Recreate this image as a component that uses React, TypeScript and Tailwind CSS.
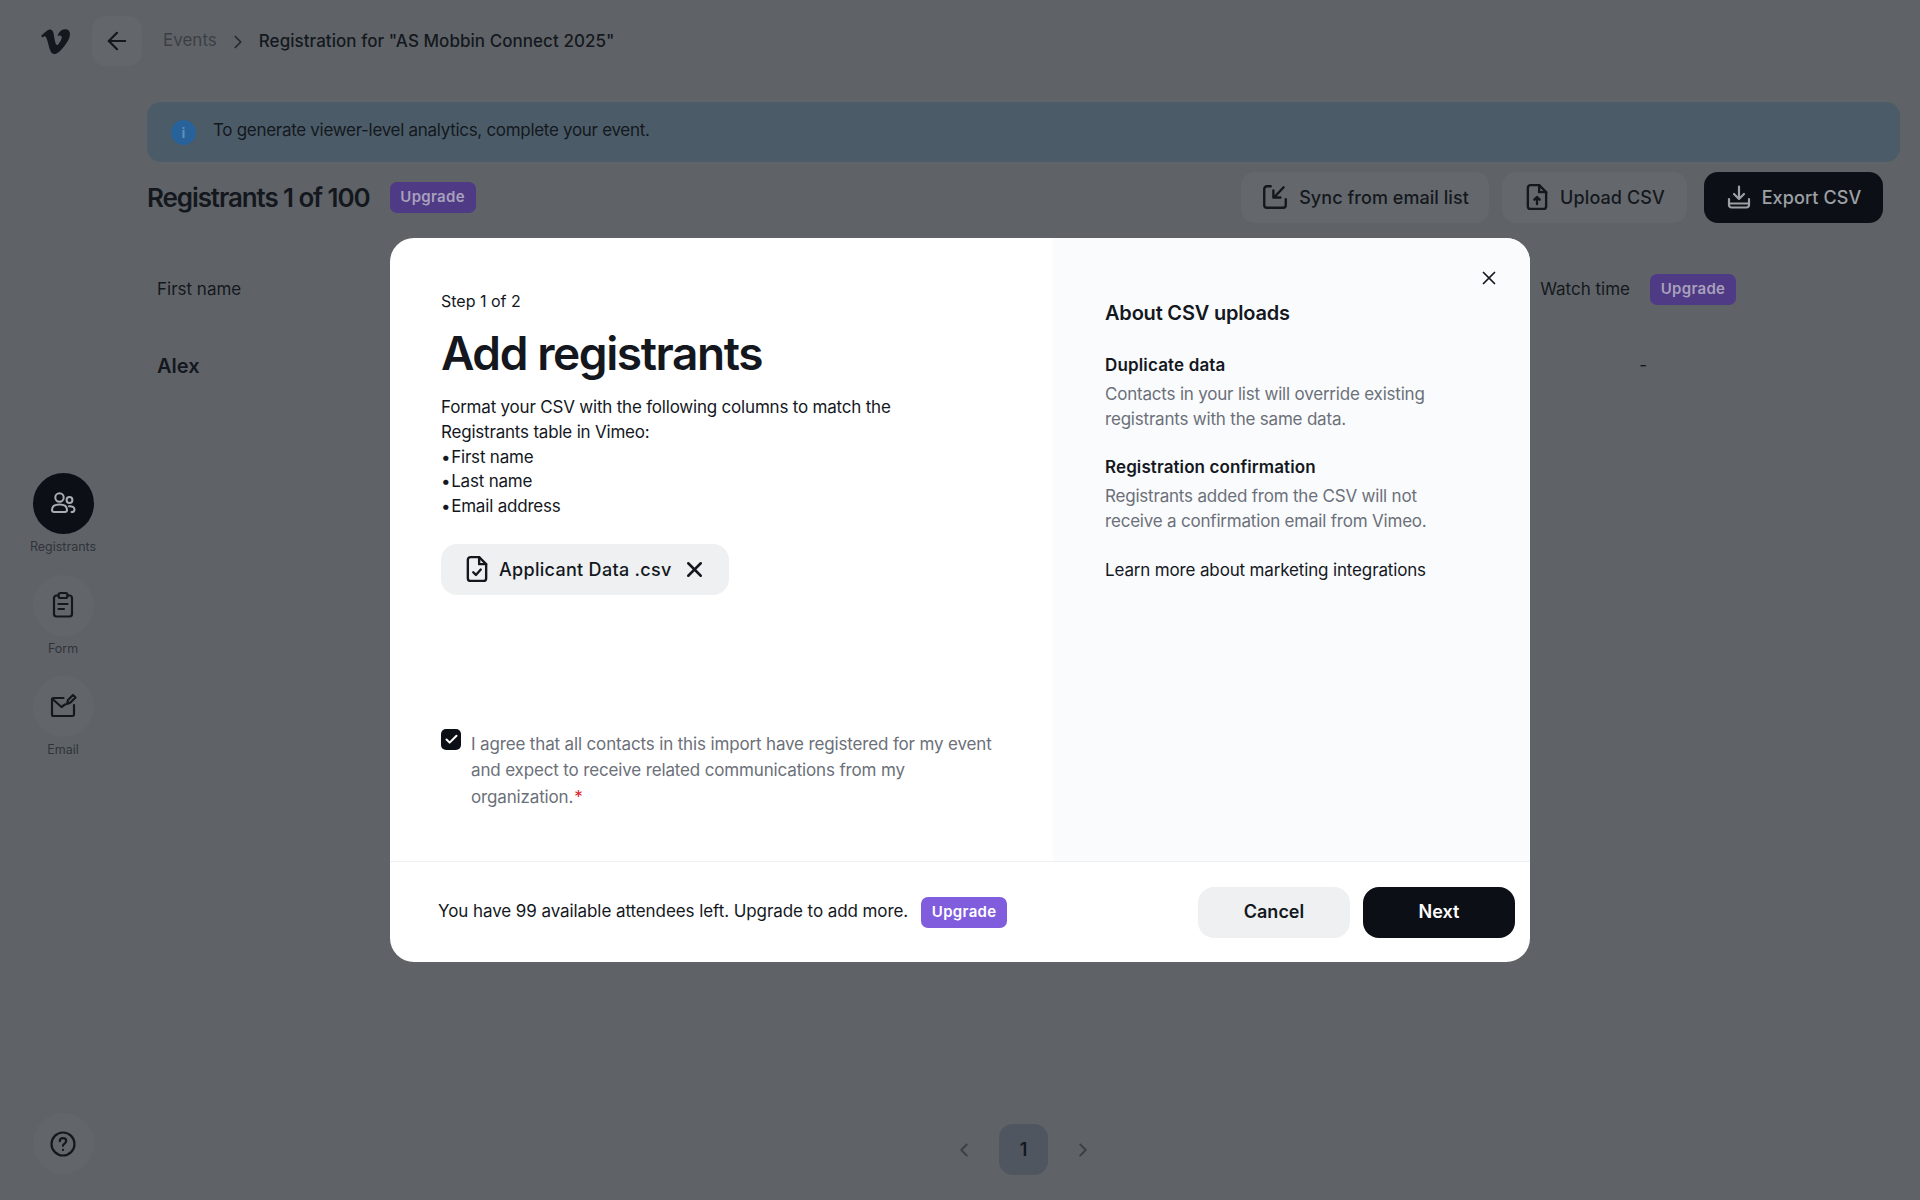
import { ArrowLeft, ChevronLeft, ChevronRight, ChevronRight as Crumb, Check, X } from "lucide-react";
import { FaVimeoV } from "react-icons/fa";

const font = "font-['Inter','Noto_Sans',sans-serif]";

function Upgrade({ dim = false }: { dim?: boolean }) {
  return (
    <span
      className={`inline-flex h-[31px] w-[86px] items-center justify-center rounded-[7px] text-[15px] font-semibold tracking-[0.3px] ${
        dim ? "bg-[#4f3a86] text-[#a8a1bb]" : "bg-[#7f5ddd] text-white"
      }`}
    >
      Upgrade
    </span>
  );
}

function UsersIcon() {
  return (
    <svg width="28" height="28" viewBox="0 0 28 28" fill="none" stroke="#a9acb0" strokeWidth="2" strokeLinecap="round" strokeLinejoin="round">
      <circle cx="10.5" cy="7.5" r="4.2" />
      <path d="M3 20c0-3.6 3-5.4 7.5-5.4s7.5 1.8 7.5 5.4c0 1.4-1 2-2.2 2H5.2C4 22 3 21.400 3 20Z" />
      <circle cx="20.500" cy="10" r="2.900" />
      <path d="M20 16.200c3.200-.3 5.500 1 5.500 3.200 0 1.600-1.200 2.600-3 2.600" />
    </svg>
  );
}

function FormIcon() {
  return (
    <svg width="26" height="28" viewBox="0 0 26 28" fill="none" stroke="#14181e" strokeWidth="2.200" strokeLinecap="round" strokeLinejoin="round">
      <path d="M8.500 4.500H6.500a2.500 2.500 0 0 0-2.500 2.500v16a2.500 2.500 0 0 0 2.500 2.500h13a2.500 2.500 0 0 0 2.500-2.500V7a2.500 2.500 0 0 0-2.500-2.500h-2" />
      <rect x="8.500" y="2" width="9" height="5" rx="2" />
      <path d="M8.500 13h9M8.500 18h5.500" />
    </svg>
  );
}

function EmailIcon() {
  return (
    <svg width="28" height="28" viewBox="0 0 28 28" fill="none" stroke="#14181e" strokeWidth="2.200" strokeLinecap="round" strokeLinejoin="round">
      <path d="M14.500 6H4.500A1.500 1.500 0 0 0 3 7.500v15A1.500 1.500 0 0 0 4.500 24h19a1.500 1.500 0 0 0 1.500-1.500V13" />
      <path d="M3.500 7l9 8 3.500-2.500" />
      <path d="M18 12l1-4 5-5 2.500 2.500-5 5-3.500 1.500Z" />
    </svg>
  );
}

function SyncIcon() {
  return (
    <svg width="28" height="28" viewBox="0 0 26 26" fill="none" stroke="#14181e" strokeWidth="2.200" strokeLinecap="round" strokeLinejoin="round">
      <path d="M9 3H5.500A2.500 2.500 0 0 0 3 5.500v15A2.500 2.500 0 0 0 5.500 23h15a2.500 2.500 0 0 0 2.500-2.500V15" />
      <path d="M21 4l-8.500 9M11.500 7v6.500H18" />
    </svg>
  );
}

function UploadIcon() {
  return (
    <svg width="26" height="28" viewBox="0 0 24 26" fill="none" stroke="#14181e" strokeWidth="2.200" strokeLinecap="round" strokeLinejoin="round">
      <path d="M14 2H6a2.500 2.500 0 0 0-2.500 2.500v17A2.500 2.500 0 0 0 6 24h12a2.500 2.500 0 0 0 2.500-2.500V8.500L14 2Z" />
      <path d="M14 2v6.500h6.500" />
      <path d="M12 19.500v-6M9.500 15.500l2.500-2.500 2.500 2.500" />
    </svg>
  );
}

function DownloadIcon() {
  return (
    <svg width="26" height="26" viewBox="0 0 26 26" fill="none" stroke="#9da0a4" strokeWidth="2.200" strokeLinecap="round" strokeLinejoin="round">
      <path d="M3 15v6a2.500 2.500 0 0 0 2.500 2.500h15A2.500 2.500 0 0 0 23 21v-6" />
      <path d="M3 19.500h20" />
      <path d="M13 2.500v12M8 10l5 5 5-5" />
    </svg>
  );
}

function FileCheckIcon() {
  return (
    <svg width="26" height="28" viewBox="0 0 24 26" fill="none" stroke="#14181e" strokeWidth="2.200" strokeLinecap="round" strokeLinejoin="round">
      <path d="M14 2H6a2.500 2.500 0 0 0-2.500 2.500v17A2.500 2.500 0 0 0 6 24h12a2.500 2.500 0 0 0 2.500-2.500V8.500L14 2Z" />
      <path d="M14 2v6.500h6.500" />
      <path d="M8.500 16l2.500 2.500 4.500-5" />
    </svg>
  );
}

function Bullet({ children }: { children: string }) {
  return (
    <p>
      <span className="tracking-[-4px]">•</span> {children}
    </p>
  );
}

function Background() {
  return (
    <div className="flex h-[1200px] flex-col">
      {/* Top bar */}
      <header className="mb-[20px] flex h-[82px] items-center pl-[39px]">
        <FaVimeoV className="h-[33px] w-[33px] text-[#14181e]" />
        <button className="ml-[20px] flex h-[50px] w-[50px] items-center justify-center rounded-[14px] bg-[#63676b]">
          <ArrowLeft size={28} className="text-[#14181e]" strokeWidth={1.9} />
        </button>
        <span className="ml-[21px] text-[17px] text-[#3b3f45]">Events</span>
        <Crumb size={22} className="ml-[10px] mt-[2px] text-[#23272c]" strokeWidth={1.8} />
        <span className="ml-[10px] mt-[2px] text-[17px] font-medium tracking-[0.05px] text-[#14181e]">
          Registration for "AS Mobbin Connect 2025"
        </span>
      </header>

      <div className="flex flex-1">
        {/* Side rail */}
        <aside className="flex w-[126px] flex-col items-center pb-[26px] pt-[371px]">
          <div className="flex h-[61px] w-[61px] items-center justify-center rounded-full bg-[#0c1016]">
            <UsersIcon />
          </div>
          <span className="mt-[4px] text-[12.500px] text-[#30343a]">Registrants</span>
          <div className="mt-[18px] flex h-[61px] w-[61px] items-center justify-center rounded-full bg-[#62666a]">
            <FormIcon />
          </div>
          <span className="mt-[4px] text-[12.500px] text-[#30343a]">Form</span>
          <div className="mt-[17px] flex h-[61px] w-[61px] items-center justify-center rounded-full bg-[#62666a]">
            <EmailIcon />
          </div>
          <span className="mt-[4px] text-[12.500px] text-[#30343a]">Email</span>
          <div className="mt-auto flex h-[61px] w-[61px] items-center justify-center rounded-full bg-[#62666a]">
            <svg width="28" height="28" viewBox="0 0 28 28" fill="none" stroke="#14181e" strokeWidth="2.200" strokeLinecap="round">
              <circle cx="14" cy="14" r="11.500" />
              <path d="M10.800 11.200c0-1.800 1.400-3 3.200-3s3.200 1.200 3.200 2.900c0 2.500-3.200 2.500-3.200 4.700" />
              <path d="M14 19.800v.1" />
            </svg>
          </div>
        </aside>

        {/* Main column */}
        <main className="ml-[21px] flex flex-1 flex-col pr-[20px]">
          <div className="flex h-[60px] items-center rounded-[14px] bg-[#4b5c68] pl-[24px] text-[17px] text-[#14181e]">
            <span className="flex h-[25px] w-[25px] items-center justify-center rounded-full bg-[#27639a] text-[14px] font-bold text-[#5f8fb8]">
              i
            </span>
            <span className="mb-[2px] ml-[17px] tracking-[-0.3px]">To generate viewer-level analytics, complete your event.</span>
          </div>

          <div className="mt-[9px] flex h-[52px] items-center pr-[17px]">
            <h2 className="text-[26px] font-semibold tracking-[-1.100px] text-[#14181e]">Registrants 1 of 100</h2>
            <span className="ml-[20px]">
              <Upgrade dim />
            </span>
            <div className="ml-auto flex">
              <button className="flex h-[51px] w-[248px] items-center justify-center gap-[10px] rounded-[14px] bg-[#64686c] text-[18px] font-medium tracking-[0.05px] text-[#14181e]">
                <SyncIcon />
                Sync from email list
              </button>
              <button className="ml-[13px] flex h-[51px] w-[185px] items-center justify-center gap-[10px] rounded-[14px] bg-[#64686c] text-[18px] font-medium tracking-[0.1px] text-[#14181e]">
                <UploadIcon />
                Upload CSV
              </button>
              <button className="ml-[17px] flex h-[51px] w-[179px] items-center justify-center gap-[10px] rounded-[14px] bg-[#0c1016] text-[18px] font-medium tracking-[0.1px] text-[#9da0a4]">
                <DownloadIcon />
                Export CSV
              </button>
            </div>
          </div>

          {/* Table */}
          <div className="mt-[51px] flex h-[31px] items-center pl-[10px] text-[17px] text-[#14181e]">
            <span>First name</span>
            <span className="ml-auto">Watch time</span>
            <span className="ml-[20px] mr-[164px]">
              <Upgrade dim />
            </span>
          </div>
          <div className="mt-[46px] flex h-[30px] items-center pl-[10px] text-[#14181e]">
            <span className="text-[20px] font-semibold">Alex</span>
            <span className="ml-auto mr-[253px] text-[17px]">-</span>
          </div>

          {/* Pagination */}
          <div className="mt-auto flex items-center pb-[25px] pl-[806px]">
            <ChevronLeft size={22} className="text-[#3b3f45]" strokeWidth={2} />
            <span className="ml-[24px] flex h-[51px] w-[49px] items-center justify-center rounded-[14px] bg-[#50565f] text-[18px] font-semibold text-[#14181e]">
              1
            </span>
            <ChevronRight size={22} className="ml-[24px] text-[#3b3f45]" strokeWidth={2} />
          </div>
        </main>
      </div>
    </div>
  );
}

function Dialog() {
  return (
    <div className="absolute inset-0 flex items-center justify-center">
      <div className="relative flex h-[724px] w-[1140px] flex-col overflow-hidden rounded-[24px] bg-white">
        <button className="absolute right-[30px] top-[29px]">
          <X size={22} className="text-[#14181e]" strokeWidth={1.9} />
        </button>

        <div className="flex flex-1">
          {/* Left side */}
          <div className="flex w-[663px] flex-col pl-[51px] pr-[39px] pt-[51px]">
            <p className="text-[16px] leading-[24px] text-[#14181e]">Step 1 of 2</p>
            <h1 className="mt-[12px] text-[46px] font-semibold leading-[56px] tracking-[-1.400px] text-[#14181e]">
              Add registrants
            </h1>
            <div className="mt-[14px] text-[17px] leading-[24.800px] tracking-[-0.2px] text-[#14181e]">
              <p>Format your CSV with the following columns to match the</p>
              <p>Registrants table in Vimeo:</p>
              <Bullet>First name</Bullet>
              <Bullet>Last name</Bullet>
              <Bullet>Email address</Bullet>
            </div>
            <div className="mt-[25px] flex h-[51px] w-[288px] items-center rounded-[16px] bg-[#eef0f1] pl-[23px]">
              <FileCheckIcon />
              <span className="ml-[9px] text-[18px] font-medium tracking-[0.3px] text-[#14181e]">Applicant Data .csv</span>
              <X size={25} className="ml-[10px] text-[#14181e]" strokeWidth={2.4} />
            </div>

            <label className="mb-[51px] mt-auto flex gap-[10px]">
              <span className="mt-[-2px] flex h-[21px] w-[20px] shrink-0 items-center justify-center rounded-[5px] bg-[#0c1016]">
                <Check size={15} className="text-white" strokeWidth={3.2} />
              </span>
              <span className="text-[17px] leading-[26.5px] tracking-[-0.15px] text-[#6b7079]">
                I agree that all contacts in this import have registered for my event and expect to receive related
                communications from my organization.<span className="ml-[1px] text-[#d8232a]">*</span>
              </span>
            </label>
          </div>

          {/* Right side */}
          <div className="flex-1 bg-[#fafbfd] pl-[52px] pr-[59px] pt-[61px] text-[17px] leading-[25px]">
            <h3 className="text-[20px] font-semibold leading-[28px] tracking-[-0.2px] text-[#14181e]">About CSV uploads</h3>
            <h4 className="mt-[26px] font-semibold tracking-[0.15px] text-[#14181e]">Duplicate data</h4>
            <p className="mt-[4px] tracking-[-0.2px] text-[#6b7079]">
              Contacts in your list will override existing registrants with the same data.
            </p>
            <h4 className="mt-[23px] font-semibold tracking-[0.1px] text-[#14181e]">Registration confirmation</h4>
            <p className="mt-[4px] tracking-[-0.2px] text-[#6b7079]">
              Registrants added from the CSV will not receive a confirmation email from Vimeo.
            </p>
            <p className="mt-[24px] tracking-[-0.15px] text-[#14181e]">Learn more about marketing integrations</p>
          </div>
        </div>

        {/* Footer */}
        <div className="flex h-[101px] items-center border-t border-[#eef0f1] pl-[48px] pr-[15px]">
          <span className="text-[17px] tracking-[-0.08px] text-[#14181e]">You have 99 available attendees left. Upgrade to add more.</span>
          <span className="ml-[13px]">
            <Upgrade />
          </span>
          <button className="ml-auto h-[51px] w-[152px] rounded-[16px] bg-[#eef0f1] pb-[2px] text-[18px] font-semibold text-[#14181e]">
            Cancel
          </button>
          <button className="ml-[13px] h-[51px] w-[152px] rounded-[16px] bg-[#0c1016] pb-[2px] text-[18px] font-semibold text-white">
            Next
          </button>
        </div>
      </div>
    </div>
  );
}

export default function App() {
  return (
    <div className={`relative h-[1200px] w-full overflow-hidden bg-[#5f6367] ${font}`}>
      <Background />
      <Dialog />
    </div>
  );
}
